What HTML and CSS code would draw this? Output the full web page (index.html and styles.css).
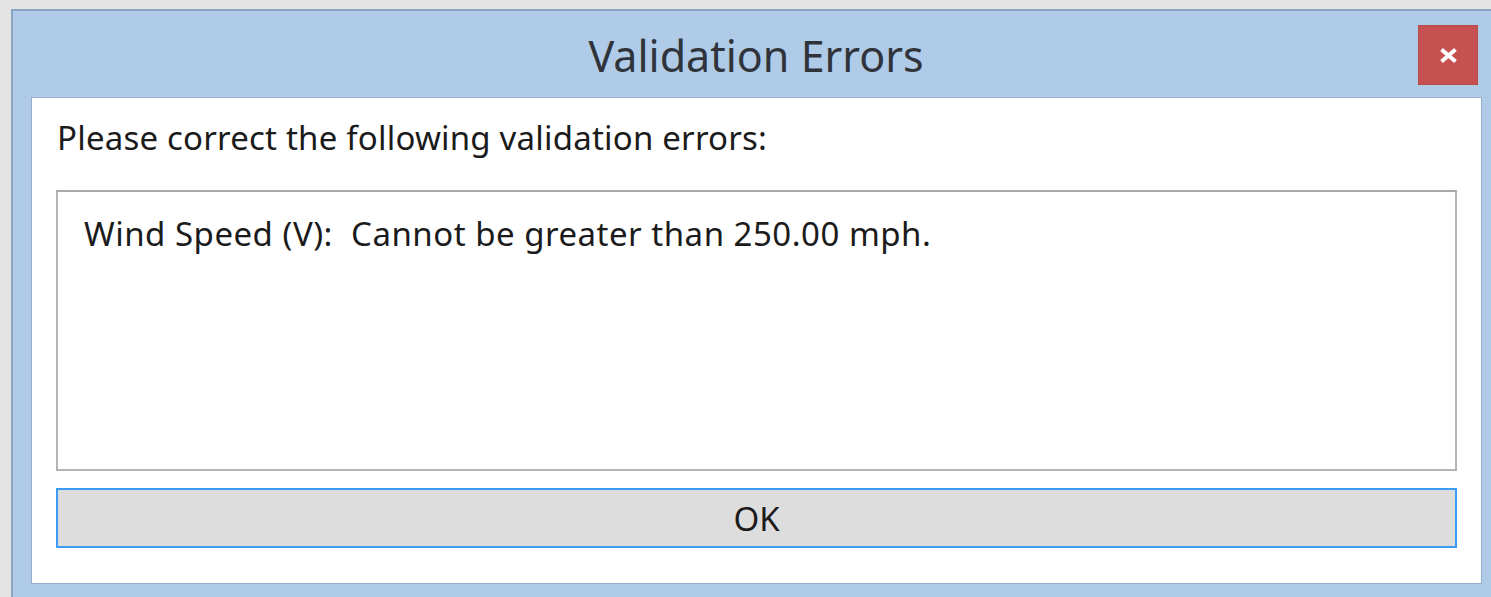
FILE: index.html
```html
<!DOCTYPE html>
<html lang="en">
<head>
<meta charset="utf-8">
<title>Validation Errors</title>
<link rel="stylesheet" href="styles.css">
</head>
<body>
<div class="window">
  <div class="titlebar">
    <span class="spacer"></span>
    <h1 class="title">Validation Errors</h1>
    <div class="controls">
      <button class="close" aria-label="Close">
        <svg width="19" height="15" viewBox="0 0 19 15" aria-hidden="true">
          <path d="M2.5 1.5 L16.5 13.5 M16.5 1.5 L2.5 13.5" stroke="#fff" stroke-width="4" stroke-linecap="butt"/>
        </svg>
      </button>
    </div>
  </div>
  <div class="client">
    <p class="prompt">Please correct the following validation errors:</p>
    <div class="errors">
      <div class="error-item">Wind Speed (V):&nbsp; Cannot be greater than 250.00 mph.</div>
    </div>
    <button class="ok">OK</button>
  </div>
</div>
</body>
</html>
```
FILE: styles.css
```css
html, body {
  margin: 0;
  padding: 0;
  height: 100%;
  overflow: hidden;
}

body {
  background: #e4e4e4;
  font-family: "Noto Sans", "Open Sans", sans-serif;
  color: #1b1b1b;
}

/* window frame; its right edge runs past the viewport */
.window {
  margin: 9px 0 0 11px;
  width: 1490px;
  height: 588px;
  box-sizing: border-box;
  background: #afcbe8;
  border: 2px solid #8aa5c3;
  border-bottom: 0;
  padding: 0 18px;
  display: flex;
  flex-direction: column;
}

.titlebar {
  height: 86px;
  flex: none;
  display: grid;
  grid-template-columns: 1fr auto 1fr;
  align-items: start;
}

.title {
  margin: 0;
  padding-top: 20px;
  font-weight: normal;
  font-size: 43px;
  line-height: 50px;
  color: #30343a;
}

.controls {
  display: flex;
  justify-content: flex-end;
  padding-top: 14px;
  padding-right: 3px;
}

.close {
  width: 60px;
  height: 60px;
  border: 1px solid #b84a4a;
  background: #c75050;
  padding: 0;
  display: flex;
  align-items: center;
  justify-content: center;
}

.client {
  width: 1451px;
  box-sizing: border-box;
  height: 487px;
  flex: none;
  background: #ffffff;
  border: 1px solid #94aecb;
  padding: 18px 24px 0 24px;
  display: flex;
  flex-direction: column;
}

.prompt {
  margin: 0 0 0 1px;
  font-size: 33px;
  letter-spacing: 0.2px;
  line-height: 44px;
}

.errors {
  margin-top: 30px;
  height: 281px;
  box-sizing: border-box;
  border: 2px solid #b4b4b6;
  border-top-color: #a9a9ab;
  padding: 22px 26px;
}

.error-item {
  font-size: 33px;
  letter-spacing: 0.5px;
  line-height: 40px;
}

.ok {
  margin-top: 17px;
  height: 60px;
  border: 2px solid #3c9cf5;
  background: #dddddd;
  font-family: inherit;
  font-size: 33px;
  color: #1b1b1b;
  padding: 0;
}
```
